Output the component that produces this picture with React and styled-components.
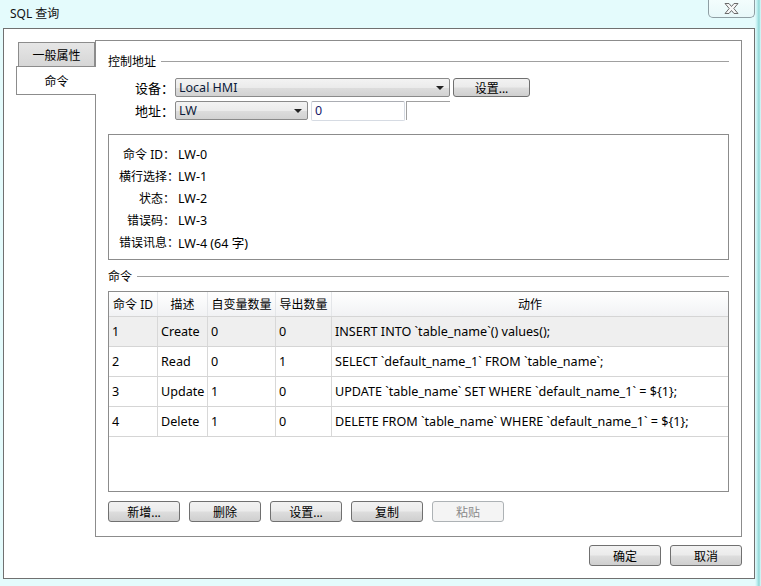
import React from "react";
import styled, { createGlobalStyle } from "styled-components";

const Global = createGlobalStyle`
  html, body {
    margin: 0;
    padding: 0;
    background: #e4fbfc;
  }
  * {
    box-sizing: border-box;
  }
`

const Window = styled.div`
  width: 761px;
  height: 586px;
  background: linear-gradient(90deg, #e4fbfc 0, #e4fbfc 755px, #bfeff0 757px, #8fd6d6 759px, #e4fbfc 761px);
  font-family: "Noto Sans", "Noto Sans CJK SC", sans-serif;
  font-size: 12px;
  color: #000;
  display: flex;
  flex-direction: column;
`

const TitleBar = styled.div`
  height: 28px;
  display: flex;
  align-items: flex-start;
  justify-content: space-between;
  padding-left: 10px;
  padding-right: 6px;
`

const Title = styled.div`
  margin-top: 6px;
  line-height: 16px;
  font-size: 12px;
  color: #111;
`

const CloseButton = styled.div`
  width: 47px;
  height: 18px;
  border: 1px solid #8f9ea3;
  border-top: none;
  border-radius: 0 0 5px 5px;
  background: linear-gradient(#f3fdfd, #e8f8f9);
  display: flex;
  align-items: center;
  justify-content: center;
`

const Client = styled.div`
  margin-left: 3px;
  width: 752px;
  height: 551px;
  background: #fff;
  border: 1px solid #707070;
  display: flex;
  flex-direction: column;
  padding: 11px 12px 0 12px;
`

const Body = styled.div`
  display: flex;
`

const TabColumn = styled.div`
  width: 79px;
  display: flex;
  flex-direction: column;
  align-items: flex-end;
  padding-top: 2px;
`

const Tab = styled.div`
  width: ${p => (p.$active ? "80px" : "77px")};
  height: ${p => (p.$active ? "29px" : "25px")};
  margin-right: ${p => (p.$active ? "-1px" : "0")};
  margin-top: ${p => (p.$active ? "-1px" : "0")};
  position: relative;
  z-index: ${p => (p.$active ? 1 : 0)};
  border: 1px solid #8c8c8c;
  border-right: ${p => (p.$active ? "none" : "1px solid #8c8c8c")};
  background: ${p => (p.$active ? "#fff" : "linear-gradient(#e6e6e6, #d6d6d6)")};
  display: flex;
  align-items: center;
  justify-content: center;
  font-size: 12px;
`

const Panel = styled.div`
  flex: 1;
  height: 497px;
  border: 1px solid #8c8c8c;
  padding: 13px 12px 0 12px;
  display: flex;
  flex-direction: column;
`

const GroupHeader = styled.div`
  display: flex;
  align-items: center;
  height: 14px;
  margin-top: ${p => p.$top || 0}px;
  &::after {
    content: "";
    flex: 1;
    height: 1px;
    background: #a0a0a0;
    margin-left: 5px;
  }
`

const FieldRow = styled.div`
  display: flex;
  align-items: center;
  height: 19px;
  margin-top: ${p => p.$top}px;
`

const FieldLabel = styled.div`
  width: 67px;
  text-align: right;
  padding-right: 1px;
  font-size: 13px;
`

const Combo = styled.div`
  width: ${p => p.$w}px;
  height: 19px;
  border: 1px solid #8a8a8a;
  border-radius: 2px;
  background: linear-gradient(#f3f3f3 0%, #ebebeb 50%, #dddddd 51%, #d2d2d2 100%);
  display: flex;
  align-items: center;
  justify-content: space-between;
  padding: 0 5px 0 3px;
  color: #0c1a3a;
  font-size: 12.5px;
`

const Arrow = styled.span`
  width: 0;
  height: 0;
  border-left: 4px solid transparent;
  border-right: 4px solid transparent;
  border-top: 4px solid #222;
`

const Button = styled.div`
  width: ${p => p.$w || 72}px;
  height: ${p => p.$h || 21}px;
  margin-left: ${p => p.$gap || 0}px;
  border: 1px solid ${p => (p.$disabled ? "#adb2b5" : "#707070")};
  border-radius: 3px;
  background: ${p =>
    p.$disabled
      ? "#f4f4f4"
      : "linear-gradient(#f2f2f2 0%, #ebebeb 48%, #dddddd 52%, #cfcfcf 100%)"};
  color: ${p => (p.$disabled ? "#8a8a8a" : "#000")};
  display: flex;
  align-items: center;
  justify-content: center;
  font-size: 12px;
`

const TextInput = styled.div`
  width: 94px;
  height: 20px;
  margin-left: 3px;
  border: 1px solid #d6dbe3;
  border-top-color: #abadb3;
  border-radius: 2px;
  padding-left: 3px;
  display: flex;
  align-items: center;
  color: #1a1a6a;
  font-size: 12.5px;
`

const GhostField = styled.div`
  width: 44px;
  height: 19px;
  margin-left: 1px;
  border-top: 1px solid #a0a0a0;
  border-left: 1px solid #a0a0a0;
`

const InfoBox = styled.div`
  margin-top: 14px;
  height: 126px;
  border: 1px solid #8c8c8c;
  padding: 8px 0 0 10px;
  display: flex;
  flex-direction: column;
`

const InfoRow = styled.div`
  display: flex;
  height: 22px;
  align-items: center;
`

const InfoLabel = styled.div`
  width: 56px;
  text-align: right;
  white-space: nowrap;
`

const InfoValue = styled.div`
  padding-left: 3px;
  font-size: 12.5px;
`

const Table = styled.div`
  margin-top: 8px;
  height: 201px;
  border: 1px solid #8c8c8c;
  display: flex;
  flex-direction: column;
`

const Row = styled.div`
  display: grid;
  grid-template-columns: 49px 50px 68px 56px 1fr;
  height: ${p => (p.$head ? 25 : 30)}px;
  border-bottom: 1px solid #d5d5d5;
  background: ${p =>
    p.$head ? "linear-gradient(#ffffff, #f1f2f4)" : p.$selected ? "#efefef" : "#fff"};
`

const Cell = styled.div`
  display: flex;
  align-items: center;
  justify-content: ${p => (p.$head ? "center" : "flex-start")};
  padding-left: ${p => (p.$head ? 0 : 3)}px;
  border-right: 1px solid ${p => (p.$head ? "#e4e6e9" : "#d8d8d8")};
  white-space: nowrap;
  overflow: hidden;
  font-size: ${p => (p.$head ? 12 : 12.6)}px;
  &:last-child {
    border-right: none;
  }
`

const ButtonBar = styled.div`
  display: flex;
  margin-top: 9px;
`

const Footer = styled.div`
  display: flex;
  justify-content: flex-end;
  margin-top: 8px;
`

const info = [
  ["命令 ID：", "LW-0"],
  ["横行选择：", "LW-1"],
  ["状态：", "LW-2"],
  ["错误码：", "LW-3"],
  ["错误讯息：", "LW-4 (64 字)"],
]

const commands = [
  ["1", "Create", "0", "0", "INSERT INTO `table_name`() values();"],
  ["2", "Read", "0", "1", "SELECT `default_name_1` FROM `table_name`;"],
  ["3", "Update", "1", "0", "UPDATE `table_name` SET WHERE `default_name_1` = ${1};"],
  ["4", "Delete", "1", "0", "DELETE FROM `table_name` WHERE `default_name_1` = ${1};"],
]

const CloseGlyph = () => (
  <svg width="17" height="13" viewBox="0 0 17 13">
    <path
      d="M2 1.5 H6 L8.5 4.5 L11 1.5 H15 L10.8 6.5 L15 11.5 H11 L8.5 8.5 L6 11.5 H2 L6.2 6.5 Z"
      fill="#f7f7f7"
      stroke="#6b6b6b"
      strokeWidth="1"
      strokeLinejoin="round"
    />
  </svg>
)

export default function App() {
  return (
    <Window>
      <Global />
      <TitleBar>
        <Title>SQL 查询</Title>
        <CloseButton>
          <CloseGlyph />
        </CloseButton>
      </TitleBar>
      <Client>
        <Body>
          <TabColumn>
            <Tab>一般属性</Tab>
            <Tab $active>命令</Tab>
          </TabColumn>
          <Panel>
            <GroupHeader>控制地址</GroupHeader>
            <FieldRow $top={10}>
              <FieldLabel>设备：</FieldLabel>
              <Combo $w={275}>
                <span>Local HMI</span>
                <Arrow />
              </Combo>
              <Button $w={77} $h={19} $gap={3}>设置...</Button>
            </FieldRow>
            <FieldRow $top={4}>
              <FieldLabel>地址：</FieldLabel>
              <Combo $w={133}>
                <span>LW</span>
                <Arrow />
              </Combo>
              <TextInput>0</TextInput>
              <GhostField />
            </FieldRow>
            <InfoBox>
              {info.map(([label, value]) => (
                <InfoRow key={label}>
                  <InfoLabel>{label}</InfoLabel>
                  <InfoValue>{value}</InfoValue>
                </InfoRow>
              ))}
            </InfoBox>
            <GroupHeader $top={9}>命令</GroupHeader>
            <Table>
              <Row $head>
                <Cell $head>命令 ID</Cell>
                <Cell $head>描述</Cell>
                <Cell $head>自变量数量</Cell>
                <Cell $head>导出数量</Cell>
                <Cell $head>动作</Cell>
              </Row>
              {commands.map((c, i) => (
                <Row key={c[0]} $selected={i === 0}>
                  {c.map((v, j) => (
                    <Cell key={j}>{v}</Cell>
                  ))}
                </Row>
              ))}
            </Table>
            <ButtonBar>
              <Button>新增...</Button>
              <Button $gap={9}>删除</Button>
              <Button $gap={9}>设置...</Button>
              <Button $gap={9}>复制</Button>
              <Button $gap={9} $disabled>粘贴</Button>
            </ButtonBar>
          </Panel>
        </Body>
        <Footer>
          <Button>确定</Button>
          <Button $gap={9}>取消</Button>
        </Footer>
      </Client>
    </Window>
  );
}
